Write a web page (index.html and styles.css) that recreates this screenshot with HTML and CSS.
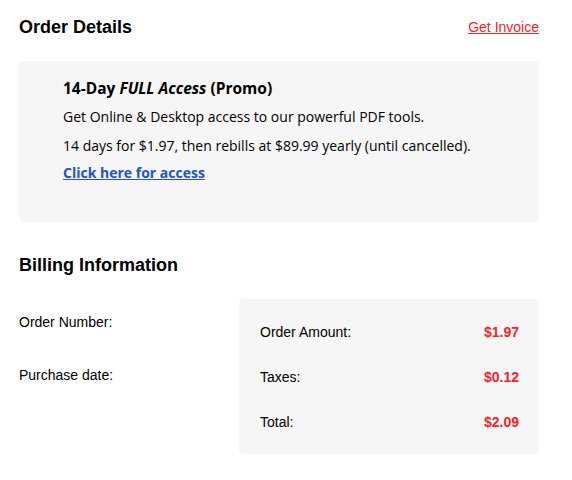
FILE: index.html
```html
<!DOCTYPE html>
<html lang="en">
  <head>
    <meta charset="UTF-8" />
    <meta name="viewport" content="width=device-width, initial-scale=1.0" />
    <title>Order Details</title>
    <link rel="stylesheet" href="styles.css">
  </head>
  <body>
    <div class="container">
      <div class="section-head">
        <h2>Order Details</h2>
        <a href="#" class="invoice-link">Get Invoice</a>
      </div>

      <!-- Product box -->
      <div class="promo">
        <h3>14-Day <em>FULL Access</em> (Promo)</h3>
        <p>Get Online &amp; Desktop access to our powerful PDF tools.</p>
        <p>14 days for $1.97, then rebills at $89.99 yearly (until cancelled).</p>
        <a href="#" class="access-link">Click here for access</a>
      </div>

      <h2 class="billing-title">Billing Information</h2>

      <!-- Billing info -->
      <div class="billing">
        <div class="billing-left">
          <div class="info-row">Order Number:</div>
          <div class="info-row">Purchase date:</div>
        </div>
        <div class="summary">
          <div class="summary-row">
            <span>Order Amount:</span>
            <span class="price">$1.97</span>
          </div>
          <div class="summary-row">
            <span>Taxes:</span>
            <span class="price">$0.12</span>
          </div>
          <div class="summary-row">
            <span>Total:</span>
            <span class="price">$2.09</span>
          </div>
        </div>
      </div>
    </div>
  </body>
</html>
```

FILE: styles.css
```css
body {
  font-family: "Liberation Sans", Arial, sans-serif;
  margin: 0;
  padding: 0 33px 0 19px;
  background-color: #fff;
  color: #000;
}
.container {
  width: 520px;
}
.section-head {
  display: flex;
  justify-content: space-between;
  align-items: center;
  height: 54px;
  margin-bottom: 7px;
}
h2 {
  font-size: 18px;
  font-weight: bold;
  margin: 0;
}
.invoice-link {
  color: #f5222d;
  font-size: 14px;
}
.promo {
  background-color: #f6f6f6;
  border-radius: 5px;
  padding: 16px 44px 39px;
  font-family: "Open Sans", sans-serif;
  font-size: 14px;
}
.promo h3 {
  font-size: 15.5px;
  font-weight: bold;
  line-height: 22px;
  margin: 0 0 7px;
}
.promo p {
  margin: 0 0 8px;
  line-height: 21px;
}
.promo p + p {
  margin-bottom: 6px;
}
.access-link {
  color: #2452c8;
  font-weight: bold;
  line-height: 21px;
}
.billing-title {
  margin: 33px 0 23px;
}
.billing {
  display: flex;
  gap: 20px;
}
.billing-left {
  width: 200px;
  padding-top: 15px;
  font-size: 14px;
}
.info-row {
  height: 53px;
}
.summary {
  flex: 1;
  background-color: #f6f6f6;
  border-radius: 5px;
  padding: 21px 20px 21px 21px;
  font-size: 14px;
}
.summary-row {
  display: flex;
  justify-content: space-between;
  align-items: center;
  height: 23px;
  margin-bottom: 22px;
}
.summary-row:last-child {
  margin-bottom: 0;
}
.price {
  color: #f5222d;
  font-weight: bold;
}
```
